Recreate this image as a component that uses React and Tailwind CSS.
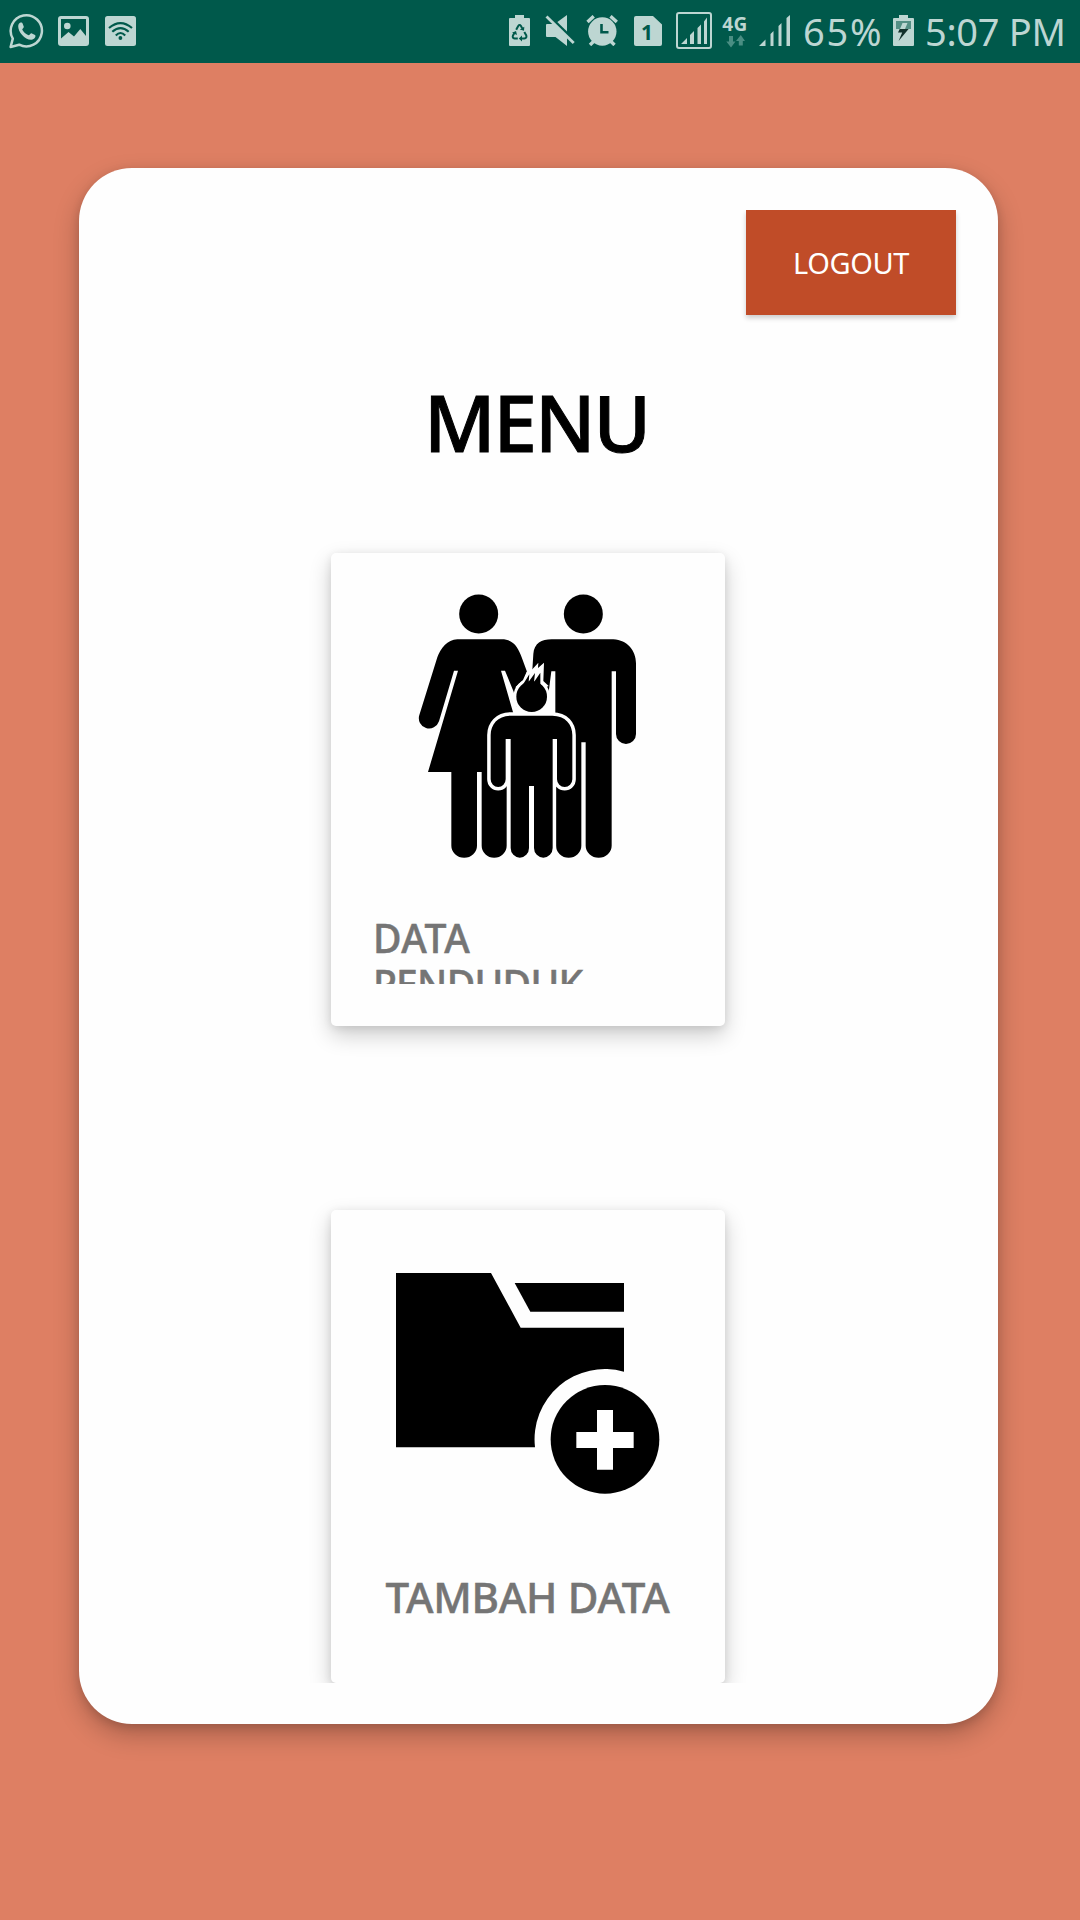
import React from "react";

const INK = "#bdd6d2";
const BAR = "#00594b";

function WhatsAppIcon() {
  return (
    <svg className="ml-[9px] h-9 w-9 shrink-0" viewBox="0 0 36 36" fill="none">
      <path d="M1.6 34 L3.8 25.6 A15.6 15.6 0 1 1 10.2 31.7 Z" stroke={INK} strokeWidth="2.5" strokeLinejoin="round" />
      <path d="M11.5 9.5 C12.5 9.2 13.4 9.8 13.7 10.7 L14.8 13.7 C15 14.6 13.2 16 13.2 16.5 C14.3 19 17 21.3 19.6 22.3 C20.5 22.3 21.6 20 22.5 20.2 L26 22 C27.4 23.1 25.5 26.5 22.5 26.8 C16 27.2 9 18.8 9.2 13.3 C9.3 11.2 10.3 9.8 11.5 9.5 Z" fill={INK} />
    </svg>
  );
}

function PictureIcon() {
  return (
    <svg className="ml-[13px] h-[30px] w-[31px] shrink-0" viewBox="0 0 31 30">
      <rect width="31" height="30" rx="3" fill={INK} />
      <path d="M3 3 H28 V20 L22.3 13 L16 20.5 L10.5 16 L3 22.5 Z" fill={BAR} />
      <circle cx="9.3" cy="10" r="3.3" fill={INK} />
    </svg>
  );
}

function WifiIcon() {
  return (
    <svg className="ml-4 h-[30px] w-[31px] shrink-0" viewBox="0 0 31 30" fill="none">
      <rect width="31" height="30" rx="2.5" fill={INK} />
      <g stroke={BAR} strokeWidth="2.2">
        <path d="M4 12 Q15.5 2.2 27 12" />
        <path d="M7.3 15.8 Q15.5 8.4 23.7 15.8" />
        <path d="M10.8 19.4 Q15.5 14.6 20.2 19.4" />
      </g>
      <circle cx="15.4" cy="22" r="1.9" fill={BAR} />
    </svg>
  );
}

function SaverBatteryIcon() {
  return (
    <svg className="h-[31px] w-[21px] shrink-0" viewBox="0 0 21 31" fill="none">
      <path d="M6 0 H15 V3 H20 Q21 3 21 4 V30 Q21 31 20 31 H1 Q0 31 0 30 V4 Q0 3 1 3 H6 Z" fill={INK} />
      <g stroke={BAR} strokeWidth="2">
        <path d="M7.2 14.8 L9.2 11 Q10.6 9 12 11 L13.2 13.4" />
        <path d="M15.3 17 L17.3 20.4 Q18 23.2 15.4 23.5 H12" />
        <path d="M8.8 23.5 H5.6 Q3 23 4 20.4 L5.7 17.6" />
      </g>
      <path d="M10.8 14.6 L15 15.8 L15.3 11.7 Z M13 20.4 V26.4 L9.8 23.5 Z M3 17.7 L7 16 L8 20 Z" fill={BAR} />
    </svg>
  );
}

function MuteIcon() {
  return (
    <svg className="ml-[15px] h-[31px] w-[30px] shrink-0" viewBox="0 0 30 31">
      <path d="M11 8 L22 0 V20 Z" fill={INK} />
      <path d="M-1 -1 L31 30" stroke={BAR} strokeWidth="7" />
      <path d="M1 10 Q1 9 2 9 H9.5 L22 21.5 V31 L10.5 22 H2 Q1 22 1 21 Z" fill={INK} />
      <path d="M1.5 1.5 L28.7 28" stroke={INK} strokeWidth="2.8" />
    </svg>
  );
}

function AlarmIcon() {
  return (
    <svg className="ml-[11px] h-[31px] w-8 shrink-0" viewBox="0 0 32 31" fill="none">
      <circle cx="16.3" cy="16.5" r="14.2" fill={INK} />
      <path d="M1.5 7 L7.7 1.2 M24.5 1.2 L30.8 7 M4 30 L8 26 M28.5 30 L24.5 26" stroke={INK} strokeWidth="3.4" />
      <path d="M15.5 9 V17.2 H22.5" stroke={BAR} strokeWidth="2.6" />
    </svg>
  );
}

function SimIcon() {
  return (
    <svg className="ml-4 h-[30px] w-7 shrink-0" viewBox="0 0 28 30">
      <path d="M2 0 H19 L28 8.5 V28 Q28 30 26 30 H2 Q0 30 0 28 V2 Q0 0 2 0 Z" fill={INK} />
      <text x="13" y="23.8" textAnchor="middle" fontFamily="Noto Sans, sans-serif" fontSize="21" fontWeight="700" fill={BAR}>1</text>
    </svg>
  );
}

function BoxedSignalIcon() {
  return (
    <svg className="ml-[14px] h-[37px] w-9 shrink-0" viewBox="0 0 36 37">
      <rect x="1" y="1" width="34" height="35" rx="2" fill="none" stroke={INK} strokeWidth="2" />
      <path d="M5 32 L11 26 V32 Z M14 23 L18 19 V32 H14 Z M21.5 16 L25 12.5 V32 H21.5 Z M28 9.5 L31 5.5 V32 H28 Z" fill={INK} />
    </svg>
  );
}

function DataIndicator() {
  return (
    <div className="ml-[9px] flex w-7 shrink-0 flex-col items-center">
      <span className="h-[20px] text-[19px] leading-[20px] font-bold tracking-[0.5px]">4G</span>
      <svg className="mt-px h-[13px] w-[19px]" viewBox="0 0 19 13">
        <path d="M3 1 H7 V6.5 H9.5 L5 12.5 L0.3 6.5 H3 Z M12.8 10.5 H16.8 V6 H19 L14.8 0 L10 6 H12.8 Z" fill="#4a8e83" />
      </svg>
    </div>
  );
}

function SignalIcon() {
  return (
    <svg className="ml-[10px] h-[31px] w-[31px] shrink-0" viewBox="0 0 31 31">
      <path d="M0 31 L6.5 24.5 V31 Z M11.5 19 L14.5 16 V31 H11.5 Z M19.5 11 L22.5 8 V31 H19.5 Z M27.5 3 L31 0 V31 H27.5 Z" fill={INK} />
    </svg>
  );
}

function ChargingIcon() {
  return (
    <svg className="h-[31px] w-[21px] shrink-0" viewBox="0 0 21 31">
      <path d="M6 0 H15 V3 H20 Q21 3 21 4 V30 Q21 31 20 31 H1 Q0 31 0 30 V4 Q0 3 1 3 H6 Z" fill={INK} />
      <rect x="3" y="6" width="15" height="8" fill="#548f85" />
      <path d="M9.5 8 H14.5 L12 14 H7 Z" fill={INK} />
      <path d="M6.7 14 H15.6 L5.6 26 L9.2 17.5 H5 Z" fill="#12302b" />
    </svg>
  );
}

function StatusBar() {
  return (
    <header className="flex h-[63px] w-full items-center bg-[#00594b] pb-[2px] text-[#bdd6d2]">
      <WhatsAppIcon />
      <PictureIcon />
      <WifiIcon />
      <div className="ml-auto flex w-[571px] shrink-0 items-center">
        <SaverBatteryIcon />
        <MuteIcon />
        <AlarmIcon />
        <SimIcon />
        <BoxedSignalIcon />
        <DataIndicator />
        <SignalIcon />
        <span className="ml-[13px] w-[90px] text-[38px] leading-[50px] tracking-[1.8px] whitespace-nowrap">65%</span>
        <ChargingIcon />
        <span className="ml-[11px] text-[38px] leading-[50px] tracking-[-0.3px] whitespace-nowrap">5:07 PM</span>
      </div>
    </header>
  );
}

function FamilyIcon() {
  return (
    <svg className="h-[264px] w-[310px] shrink-0 overflow-visible" viewBox="-81 45 930 792">
      <circle cx="236" cy="102" r="58.5" />
      <circle cx="550" cy="102" r="58.5" />
      {/* woman */}
      <path d="M172 178 H305 C342 178 355 205 365 232 L381 275 L372 300 V420 H320 V797 A37.5 36 0 0 1 245 797 V576 H231 V797 A38.5 36 0 0 1 154 797 V576 H84 L174 272 H162 L117 424 A30 30 0 0 1 58 405 L112 232 C122 205 142 179 172 178 Z" />
      {/* man */}
      <path d="M455 178 H640 C682 180 708 212 708 250 V462 A30 30 0 0 1 648 462 V274 H635 V797 A39 36 0 0 1 557 797 V487 H544 V797 A38 36 0 0 1 468 797 V420 H400 V310 L397 270 L400 222 C402 190 425 178 455 178 Z" />
      <path d="M372 295 H432 V400 H372 Z" />
      {/* clearance around the child */}
      <path d="M303 272 H315 L341 335 L350 380 H440 L448 320 L454 274 H466 V400 H340 Z" fill="#fff" />
      <circle cx="395" cy="350" r="55" fill="#fff" />
      <path d="M380 275 L397 268 L415 248 L414 264 L432 248 L430 303 L446 318 L420 330 L346 322 L369 300 Z" fill="#fff" />
      {/* child */}
      <circle cx="395" cy="350" r="46" />
      <path d="M368 315 L388 283 L386 305 L405 279 L402 306 L421 278 L421 312 L430 322 H362 Z" />
      <path d="M332 407 H457 C496 407 517 433 517 465 V598 A23 23 0 0 1 471 598 V477 H458 V804 A28 29 0 0 1 402 804 V618 H387 V804 A27.5 29 0 0 1 332 804 V477 H317 V598 A22.5 23 0 0 1 272 598 V465 C272 433 294 407 332 407 Z" stroke="#fff" strokeWidth="21" paintOrder="stroke" />
    </svg>
  );
}

function FolderAddIcon() {
  return (
    <svg className="h-[264px] w-[310px] shrink-0" viewBox="9 36 930 792">
      <path d="M78 99 H363 L452 263 H762 V395 A211 211 0 0 0 495 622 H78 Z" />
      <path d="M434 129 H762 V215 H481 Z" />
      <circle cx="705" cy="598" r="163" />
      <path d="M681 510 H729 V576 H791 V624 H729 V689 H681 V624 H619 V576 H681 Z" fill="#fff" />
    </svg>
  );
}

function MenuCard({ icon, children }) {
  return (
    <button className="flex h-[473px] w-[394px] shrink-0 flex-col rounded-[5px] bg-[#fefefe] p-[42px] shadow-[0_9px_22px_rgba(0,0,0,0.2),0_2px_8px_rgba(0,0,0,0.09)]">
      {icon}
      {children}
    </button>
  );
}

export default function App() {
  return (
    <div className="flex h-[1920px] w-[1080px] flex-col overflow-hidden bg-[#de7f63] font-['Noto_Sans',sans-serif]">
      <StatusBar />
      <main className="mt-[105px] ml-[79px] h-[1556px] w-[919px] rounded-[53px] bg-[#fefefe] py-[42px] shadow-[0_11px_26px_rgba(0,0,0,0.24),0_3px_10px_rgba(0,0,0,0.13)]">
        <div className="flex h-[1473px] flex-col overflow-hidden px-[42px]">
          <button className="h-[105px] w-[210px] shrink-0 self-end bg-[#c04c28] text-white shadow-[0_3px_5px_rgba(0,0,0,0.2)]">
            <span className="text-[29px] tracking-[-0.4px]">LOGOUT</span>
          </button>
          <h1 className="mt-[53px] h-[108px] pr-[4px] text-center text-[78px] leading-[108px] font-medium tracking-[-2px] text-black [-webkit-text-stroke:1px_black]">MENU</h1>
          <div className="mt-[77px] ml-[210px] flex flex-col gap-[184px]">
            <MenuCard icon={<FamilyIcon />}>
              <span className="mt-[56px] h-[69px] w-full overflow-hidden text-left text-[39px] leading-[46px] font-medium text-[#757575] [-webkit-text-stroke:0.5px_#757575]">
                <span className="block tracking-[0.5px]">DATA</span>
                <span className="block tracking-[-0.7px]">PENDUDUK</span>
              </span>
            </MenuCard>
            <MenuCard icon={<FolderAddIcon />}>
              <span className="mt-[51px] w-full pr-px text-center text-[42px] leading-[60px] font-medium tracking-[-0.25px] whitespace-nowrap text-[#757575] [-webkit-text-stroke:0.5px_#757575]">TAMBAH DATA</span>
            </MenuCard>
          </div>
        </div>
      </main>
    </div>
  );
}
